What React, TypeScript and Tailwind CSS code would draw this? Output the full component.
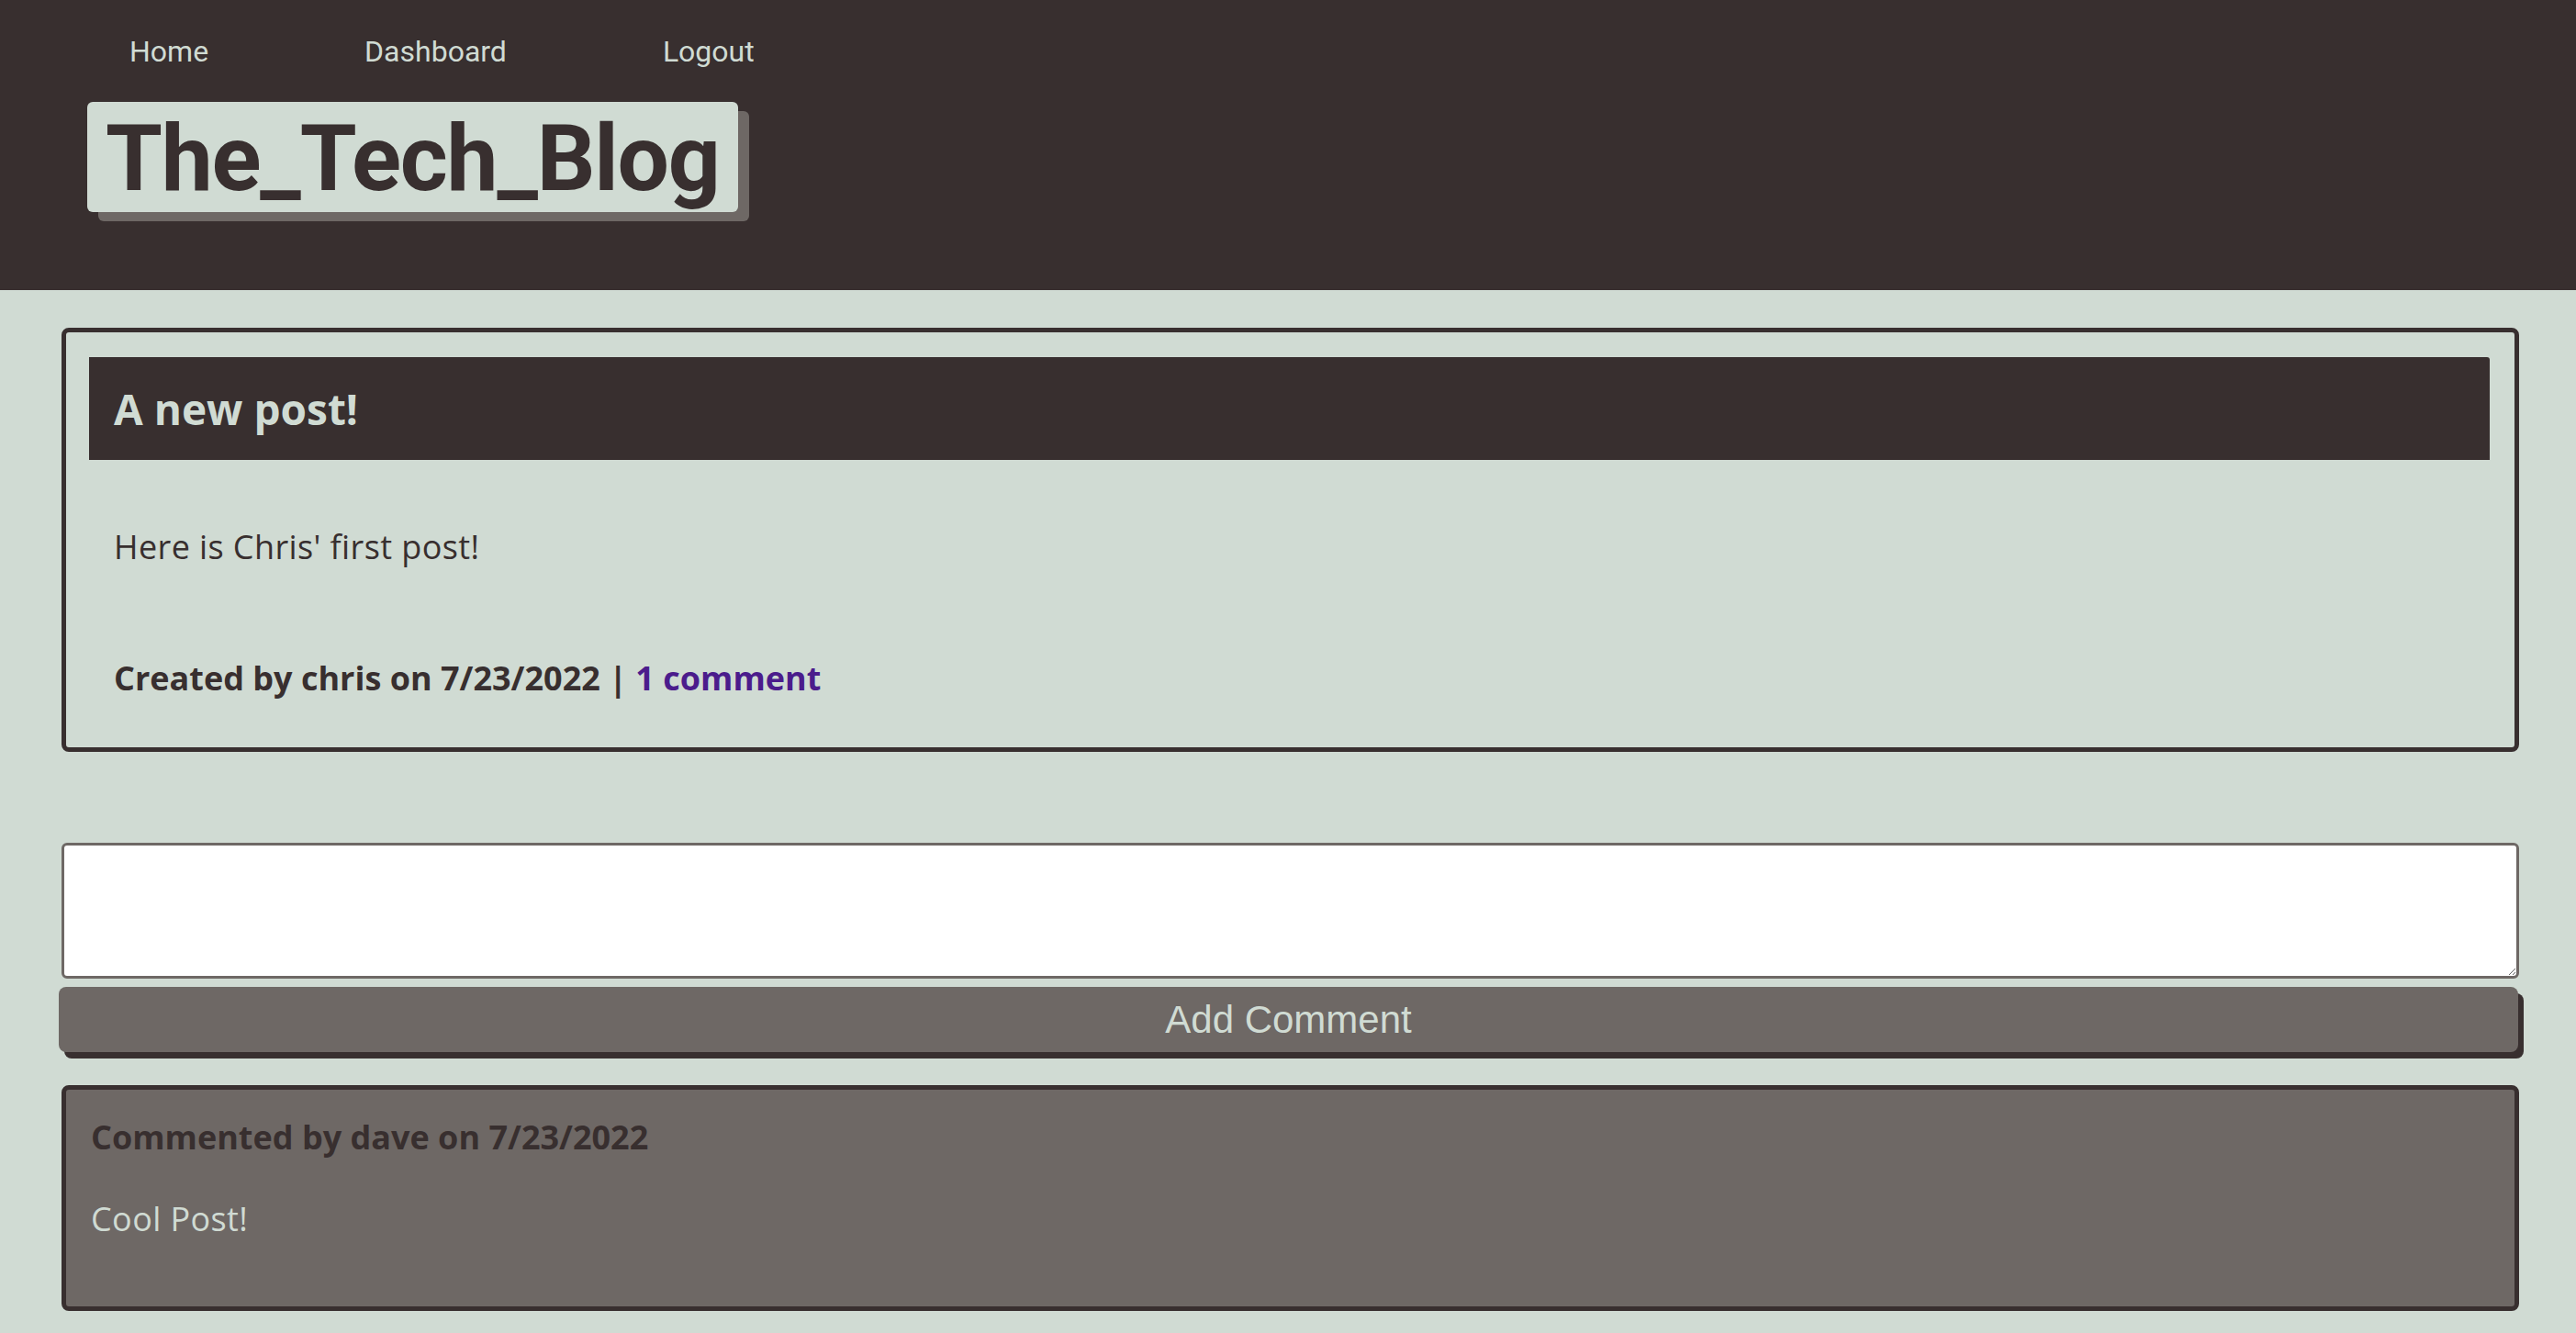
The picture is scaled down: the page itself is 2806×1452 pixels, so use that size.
export default function App() {
  const font = { fontFamily: "Roboto, 'Noto Sans', sans-serif" };
  const body = { fontFamily: "'Open Sans', Roboto, sans-serif" };
  return (
    <div className="min-h-[1452px] bg-[#d0dbd3]" style={font}>
      <header className="h-[316px] bg-[#382f2f]">
        <nav className="flex gap-[170px] pl-[141px] pt-[40px] text-[32px] leading-[32px] text-[#d0dbd3]">
          <a href="#">Home</a>
          <a href="#">Dashboard</a>
          <a href="#">Logout</a>
        </nav>
        <div className="ml-[95px] mt-[39px] inline-block h-[120px] rounded-[6px] bg-[#d0dbd3] px-[20px] pt-[4px] shadow-[12px_10px_0_#6e6865]">
          <h1 className="text-[100px] font-bold leading-[116px] tracking-[-1.2px] text-[#382f2f]">The_Tech_Blog</h1>
        </div>
      </header>

      <main className="ml-[67px] w-[2677px]" style={body}>
        <section className="mt-[41px] rounded-[8px] border-[5px] border-[#382f2f] pb-[57px] pl-[25px] pr-[27px] pt-[27px]">
          <div className="h-[112px] rounded-tr-[3px] bg-[#382f2f] pl-[27px] pt-[2px]">
            <h2 className="text-[46px] font-bold leading-[108px] text-[#d0dbd3]">A new post!</h2>
          </div>
          <p className="mt-[77px] pl-[27px] text-[36px] leading-[36px] tracking-[0.4px] text-[#382f2f]">Here is Chris' first post!</p>
          <p className="mt-[107px] pl-[27px] text-[36px] font-bold leading-[36px] text-[#382f2f]">
            Created by chris on 7/23/2022 | <a href="#" className="text-[#4b1c8c]">1 comment</a>
          </p>
        </section>

        <form className="mt-[99px]">
          <textarea className="block h-[148px] w-full rounded-[6px] border-[3px] border-[#6e6865] bg-white" />
          <button
            type="button"
            className="ml-[-3px] mt-[9px] block h-[71px] w-[2679px] rounded-[8px] bg-[#6e6865] text-center text-[42px] leading-[71px] text-[#d0dbd3] shadow-[6px_7px_0_#382f2f]"
            style={{ fontFamily: "'Liberation Sans', Arial, sans-serif" }}
          >
            Add Comment
          </button>
        </form>

        <section className="mt-[36px] rounded-[8px] border-[5px] border-[#382f2f] bg-[#6e6865] pb-[77px] pl-[27px] pt-[34px]">
          <p className="text-[36px] font-bold leading-[36px] text-[#382f2f]">Commented by dave on 7/23/2022</p>
          <p className="mt-[53px] text-[36px] leading-[36px] tracking-[0.4px] text-[#d0dbd3]">Cool Post!</p>
        </section>
      </main>
    </div>
  );
}
